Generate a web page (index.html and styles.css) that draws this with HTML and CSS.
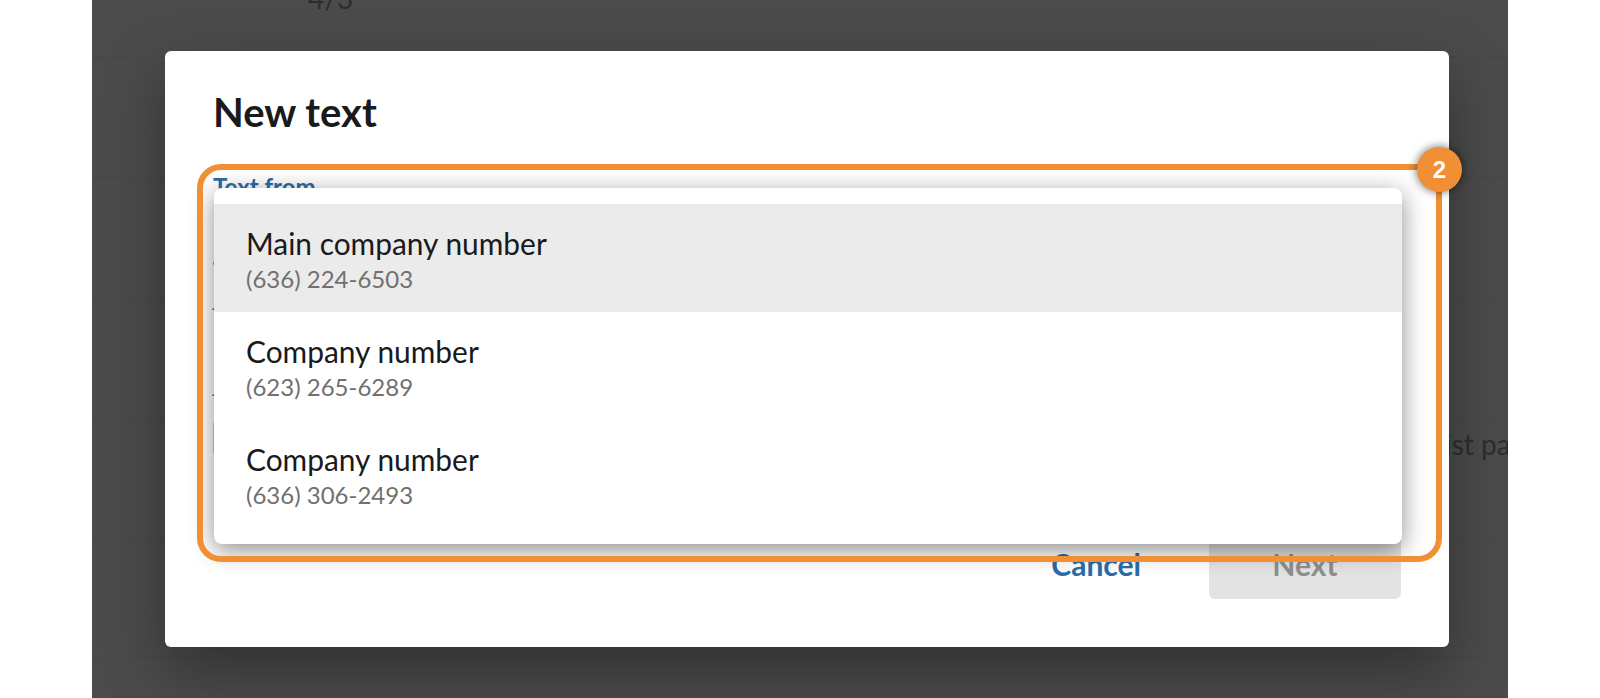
FILE: index.html
```html
<!DOCTYPE html>
<html>
<head>
  <title>New text</title>
  <link rel="stylesheet" href="styles.css">
</head>
<body>
  <div class="page">
    <!-- Table behind the dialog -->
    <div class="table">
      <div class="row row-first">
        <div class="cell-count"><span class="count">4/3</span></div>
      </div>
      <div class="row"></div>
      <div class="row"></div>
      <div class="row"></div>
      <div class="row row-text"><span class="row-label">Specialist patient follow up</span></div>
      <div class="row"></div>
    </div>
    <div class="scrim"></div>

    <!-- Dialog -->
    <div class="modal">
      <h1 class="modal-title">New text</h1>
      <form class="modal-form">
        <label class="field-label">Text from</label>
        <label class="field-label label-to">Text to</label>
        <span class="field-hint hint-to">-</span>
        <span class="field-hint hint-msg">-</span>
        <div class="field-box"></div>
      </form>
      <div class="modal-footer">
        <button type="button" class="btn btn-cancel">Cancel</button>
        <button type="button" class="btn btn-next">Next</button>
      </div>

      <!-- Open number menu -->
      <ul class="menu">
        <li class="menu-item selected">
          <span class="item-name">Main company number</span>
          <span class="item-phone">(636) 224-6503</span>
        </li>
        <li class="menu-item">
          <span class="item-name">Company number</span>
          <span class="item-phone">(623) 265-6289</span>
        </li>
        <li class="menu-item">
          <span class="item-name">Company number</span>
          <span class="item-phone">(636) 306-2493</span>
        </li>
      </ul>
    </div>

    <!-- Callout -->
    <div class="callout"></div>
    <div class="badge">2</div>
  </div>
</body>
</html>
```

FILE: styles.css
```css
* {
  box-sizing: border-box;
  font-family: Lato, "Liberation Sans", sans-serif;
}

html, body {
  height: 100%;
}

body {
  margin: 0;
  background-color: #fff;
  overflow: hidden;
}

.page {
  position: relative;
  width: 1416px;
  height: 698px;
  margin-left: 92px;
  overflow: hidden;
}

.table {
  display: flex;
  flex-direction: column;
}

.row {
  height: 120.25px;
  flex-shrink: 0;
  border-bottom: 1px solid #f0f0f0;
  white-space: nowrap;
}

.row-first {
  height: 57px;
}

.cell-count {
  width: 290px;
  height: 100%;
  padding-left: 216px;
  border-right: 1px solid #f4f4f4;
}

.count {
  display: block;
  margin-top: -19px;
  font-size: 28px;
  line-height: 34px;
  color: #999;
}

.row-text {
  padding: 8px 0 0 1267px;
  font-size: 28px;
  line-height: 36px;
  color: #999;
}

.scrim {
  position: absolute;
  inset: 0;
  background-color: rgba(0, 0, 0, 0.705);
}

.modal {
  position: absolute;
  left: 73px;
  top: 51px;
  width: 1284px;
  height: 596px;
  padding: 0 48px 48px;
  display: flex;
  flex-direction: column;
  background-color: #fff;
  border-radius: 6px;
  box-shadow: 0 24px 60px rgba(0, 0, 0, 0.35);
}

.modal-title {
  margin: 37px 0 0;
  font-size: 40px;
  line-height: 48px;
  font-weight: 700;
  color: #1a1a1a;
}

.modal-form {
  flex: 1;
  display: flex;
  flex-direction: column;
  padding-top: 36px;
}

.field-label {
  font-size: 24px;
  line-height: 30px;
  font-weight: 700;
  color: #2b6ca8;
}

.label-to {
  margin-top: 54px;
}

.field-hint {
  margin-left: -2px;
  font-size: 22px;
  line-height: 10px;
  color: #666;
}

.hint-to {
  margin-top: 17px;
}

.hint-msg {
  margin-top: 76px;
}

.field-box {
  width: 40px;
  height: 30px;
  margin-top: 24px;
  border-left: 1px solid #ccc;
}

.modal-footer {
  display: flex;
  justify-content: flex-end;
  align-items: center;
  gap: 36px;
}

.btn {
  height: 70px;
  border: none;
  border-radius: 6px;
  font-size: 30px;
  font-weight: 700;
  background: none;
}

.btn-cancel {
  padding: 0 32px;
  color: #2b6ca8;
}

.btn-next {
  width: 192px;
  background-color: #e3e3e3;
  color: #8f8f8f;
}

.menu {
  position: absolute;
  left: 49px;
  top: 137px;
  width: 1188px;
  margin: 0;
  padding: 16px 0;
  list-style: none;
  background-color: #fff;
  border-radius: 8px;
  box-shadow: 0 6px 24px rgba(0, 0, 0, 0.45);
}

.menu-item {
  height: 108px;
  padding: 20px 32px 0;
  display: flex;
  flex-direction: column;
}

.menu-item.selected {
  background-color: #ebebeb;
}

.item-name {
  font-size: 29.9px;
  line-height: 38px;
  color: #1a1a1a;
}

.item-phone {
  margin-top: 1px;
  font-size: 24px;
  line-height: 32px;
  color: #707070;
}

.callout {
  position: absolute;
  left: 105px;
  top: 164px;
  width: 1245px;
  height: 398px;
  border: 6px solid #f18f34;
  border-radius: 24px;
}

.badge {
  position: absolute;
  left: 1325px;
  top: 147px;
  width: 45px;
  height: 45px;
  display: flex;
  align-items: center;
  justify-content: center;
  border-radius: 50%;
  background-color: #f18f34;
  box-shadow: 0 0 10px rgba(0, 0, 0, 0.6);
  font-family: "Liberation Sans", sans-serif;
  font-size: 24px;
  font-weight: 700;
  color: #fff;
}
```
